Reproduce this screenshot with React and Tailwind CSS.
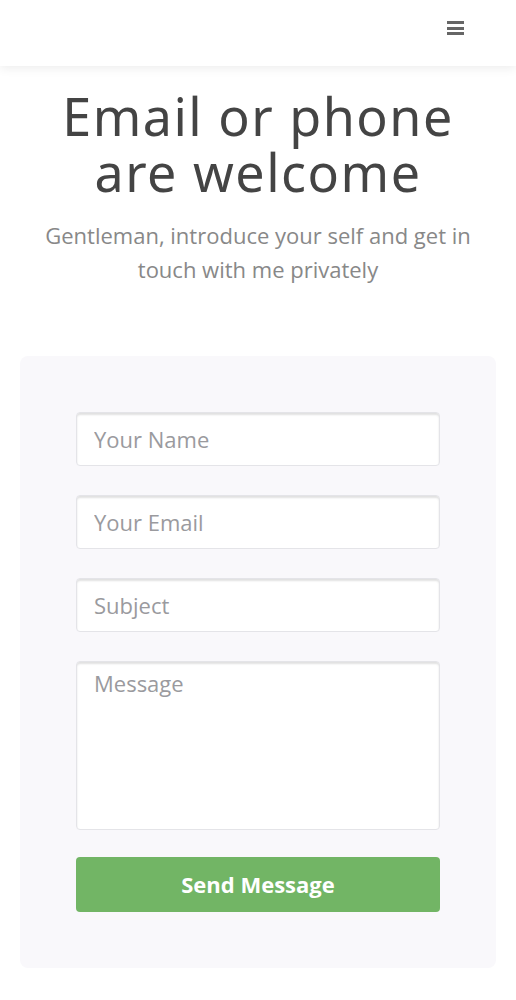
export default function App() {
  return (
    <div className="min-h-screen bg-white" style={{ fontFamily: "'Open Sans', sans-serif" }}>
      <header className="h-[66px] bg-white shadow-[0_2px_10px_rgba(0,0,0,0.08)] flex items-start justify-end pt-[21px] pr-[52px]">
        <button className="flex flex-col gap-[2.5px] w-[17px]">
          <span className="h-[3px] w-full bg-[#666]" />
          <span className="h-[3px] w-full bg-[#666]" />
          <span className="h-[3px] w-full bg-[#666]" />
        </button>
      </header>

      <section className="px-3 pt-[22px] text-center">
        <h1
          className="text-[52px] leading-[56px] tracking-[1.5px] text-[#444]"
          style={{ fontFamily: "'Noto Sans', sans-serif" }}
        >
          <span className="block">Email or phone</span>
          <span className="block">are welcome</span>
        </h1>
        <p className="mt-[18px] text-[22px] leading-[34px] text-[#888] px-2">
          Gentleman, introduce your self and get in touch with me privately
        </p>
      </section>

      <div className="mx-5 mt-[70px] mb-8 rounded-lg bg-[#f9f8fb] p-[56px]">
        <form className="flex flex-col gap-[29px]">
          <input
            placeholder="Your Name"
            className="h-[54px] w-full rounded border border-[#e4e4e8] bg-white px-[17px] text-[22px] text-[#555] placeholder-[#9a9a9e] shadow-[inset_0_2px_2px_rgba(0,0,0,0.12)] outline-none"
          />
          <input
            placeholder="Your Email"
            className="h-[54px] w-full rounded border border-[#e4e4e8] bg-white px-[17px] text-[22px] text-[#555] placeholder-[#9a9a9e] shadow-[inset_0_2px_2px_rgba(0,0,0,0.12)] outline-none"
          />
          <input
            placeholder="Subject"
            className="h-[54px] w-full rounded border border-[#e4e4e8] bg-white px-[17px] text-[22px] text-[#555] placeholder-[#9a9a9e] shadow-[inset_0_2px_2px_rgba(0,0,0,0.12)] outline-none"
          />
          <textarea
            placeholder="Message"
            className="h-[169px] w-full resize-none rounded border border-[#e4e4e8] bg-white px-[17px] pt-[5px] text-[22px] text-[#555] placeholder-[#9a9a9e] shadow-[inset_0_2px_2px_rgba(0,0,0,0.12)] outline-none"
          />
          <button
            type="button"
            className="-mt-[2px] h-[55px] w-full rounded bg-[#72b565] text-[22px] font-bold text-white"
          >
            Send Message
          </button>
        </form>
      </div>
    </div>
  );
}
